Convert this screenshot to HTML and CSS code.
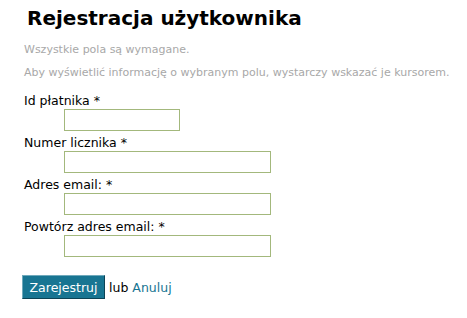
FILE: index.html
```html
<html>
  <head>
    <meta charset="utf-8">
    <title>Rejestracja użytkownika</title>
    <link rel="stylesheet" href="styles.css">
  </head>
  <body>
    <div class="page">
      <h1>Rejestracja użytkownika</h1>
      <p class="note">Wszystkie pola są wymagane.</p>
      <p class="note">Aby wyświetlić informację o wybranym polu, wystarczy wskazać je kursorem.</p>
      <form class="register">
        <div class="field">
          <label for="payer">Id płatnika *</label>
          <input type="text" id="payer" class="short">
        </div>
        <div class="field">
          <label for="meter">Numer licznika *</label>
          <input type="text" id="meter">
        </div>
        <div class="field">
          <label for="email">Adres email: *</label>
          <input type="text" id="email">
        </div>
        <div class="field">
          <label for="email2">Powtórz adres email: *</label>
          <input type="text" id="email2">
        </div>
        <div class="actions">
          <button type="button" class="submit">Zarejestruj</button>
          <span>lub</span>
          <a href="#" class="cancel">Anuluj</a>
        </div>
      </form>
    </div>
  </body>
</html>
```

FILE: styles.css
```css
body {
  margin: 0;
  background-color: #fff;
  color: #000;
  font-family: "DejaVu Sans", Verdana, sans-serif;
}

.page {
  padding: 4px 0 0 24px;
}

h1 {
  margin: 0 0 0 3px;
  font-size: 20px;
  line-height: 28px;
  font-weight: bold;
}

.note {
  margin: 11px 0 0 0;
  font-size: 11px;
  line-height: 13px;
  color: #a8a8a8;
}

.note + .note {
  margin-top: 10px;
}

.register {
  margin-top: 14px;
}

.field {
  display: flex;
  flex-direction: column;
  align-items: flex-start;
  margin-bottom: 4px;
}

.field label {
  font-size: 12.5px;
  line-height: 16px;
}

.field input {
  margin-left: 40px;
  width: 207px;
  height: 22px;
  box-sizing: border-box;
  border: 1px solid #a3b87c;
  padding: 2px 4px;
}

.field input.short {
  width: 116px;
}

.actions {
  margin-top: 18px;
  display: flex;
  align-items: center;
  gap: 4px;
  font-size: 12.5px;
}

.submit {
  margin-left: -2px;
  width: 83px;
  height: 24px;
  background-color: #187592;
  color: #fff;
  font-family: "DejaVu Sans", Verdana, sans-serif;
  font-size: 12.5px;
  border: 1px solid;
  border-color: #6fa9bb #0c4355 #0c4355 #6fa9bb;
  padding: 0;
}

.cancel {
  color: #187592;
  text-decoration: none;
}
```
